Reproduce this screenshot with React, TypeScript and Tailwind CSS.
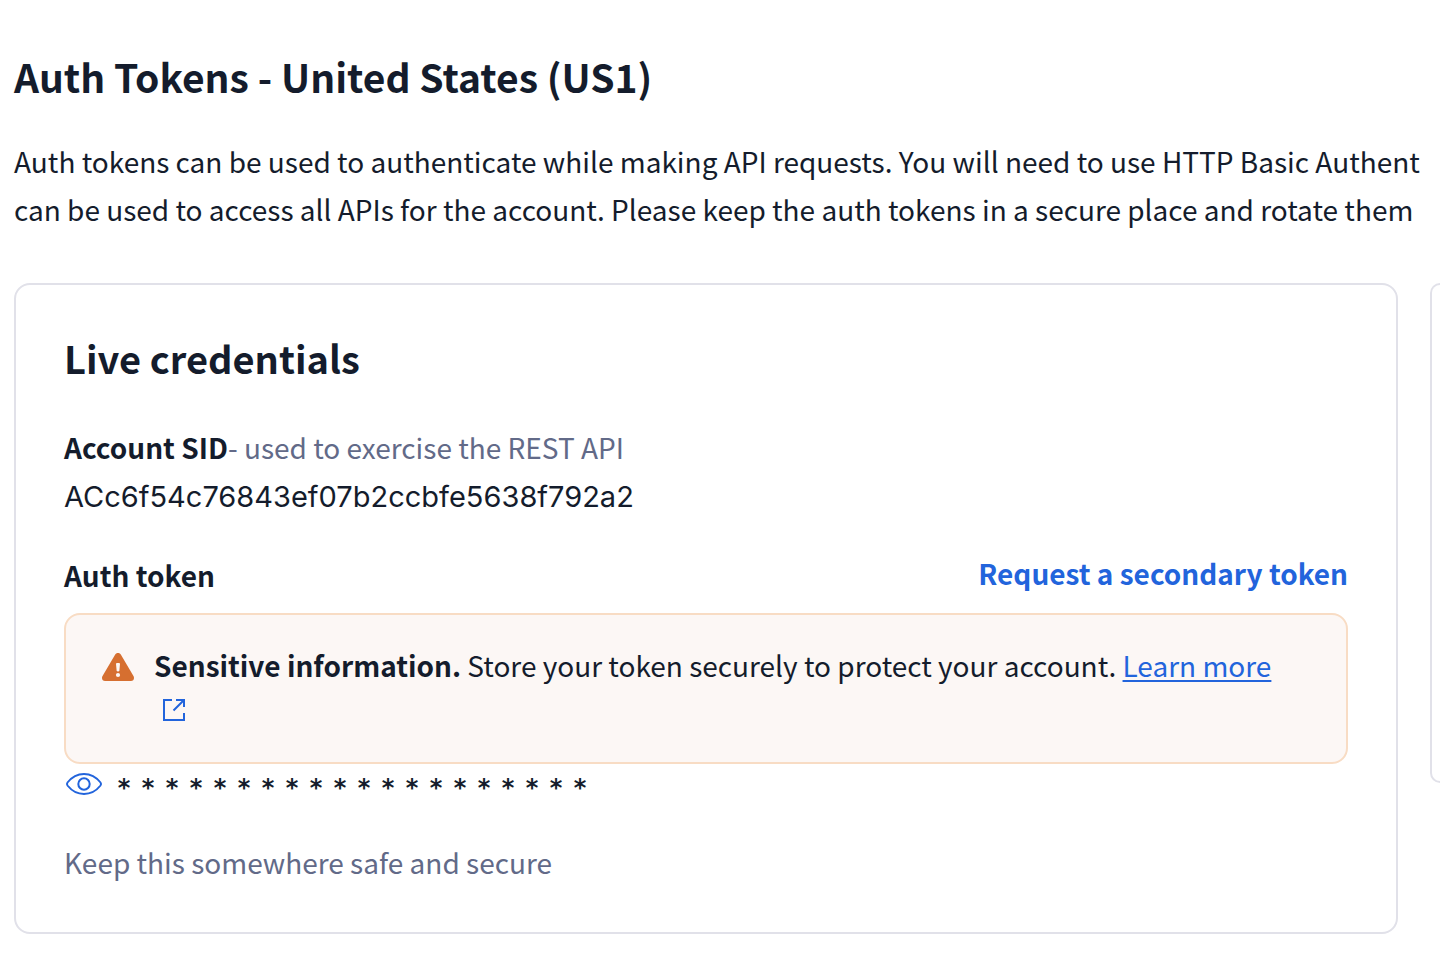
const MASK_LENGTH = 20;

function WarningIcon() {
  return (
    <svg className="h-7 w-8" viewBox="0 0 32 28" aria-hidden="true">
      <path
        d="M13.2 1.600a3.200 3.200 0 0 1 5.600 0l12.800 21.700c1.100 2.100-.2 4.700-2.700 4.700H3.100C.6 28-.7 25.400.4 23.300z"
        fill="#d66f30"
      />
      <path d="M14 11q0-1 1-1h2q1 0 1 1l-.6 6.200q-.2 1.300-1.400 1.300t-1.400-1.300z" fill="#fcf7f5" />
      <circle cx="16" cy="22" r="2.100" fill="#fcf7f5" />
    </svg>
  );
}

function ExternalIcon() {
  return (
    <svg className="h-6 w-6" viewBox="0 0 24 24" fill="none" stroke="#2264dc" strokeWidth="2" aria-hidden="true">
      <path d="M10 2H2v20h20v-7M14 2h8v7M22 2L11.500 12.500" />
    </svg>
  );
}

function EyeIcon() {
  return (
    <svg className="h-6 w-10" viewBox="0 0 40 24" fill="none" stroke="#2264dc" strokeWidth="2" aria-hidden="true">
      <path d="M3.500 10.500C7.500 5.500 13 2 20 2s12.500 3.500 16.500 8.500q1.100 1.500 0 3C32.500 18.500 27 22 20 22S7.500 18.500 3.500 13.500q-1.100-1.500 0-3z" />
      <circle cx="20" cy="12" r="5.700" />
    </svg>
  );
}

export default function App() {
  return (
    <main className="overflow-hidden bg-white pt-12 pl-[14px] pb-10 font-['Noto_Sans_CJK_SC','Noto_Sans',sans-serif] text-[28px] leading-[48px] text-[#141c2c]">
      <h1 className="text-[39px] font-semibold leading-[56px]">Auth Tokens - United States (US1)</h1>
      <p className="mt-[33px] whitespace-nowrap">
        Auth tokens can be used to authenticate while making API requests. You will need to use HTTP Basic Authent
        <br />
        can be used to access all APIs for the account. Please keep the auth tokens in a secure place and rotate them
      </p>

      <div className="mt-[50px] grid grid-cols-[minmax(0,1fr)_10px] items-start gap-8">
        <section className="rounded-[16px] border-2 border-[#e1e1e9] p-12">
          <h2 className="text-[38px] font-semibold leading-[50px]">Live credentials</h2>
          <p className="mt-10">
            <strong className="font-semibold">Account SID</strong>
            <span className="text-[#626a88]">- used to exercise the REST API</span>
          </p>
          <p className="font-['Inter',sans-serif] text-[29px] leading-[52px]">ACc6f54c76843ef07b2ccbfe5638f792a2</p>

          <div className="mt-7 flex items-start justify-between">
            <h3 className="font-semibold">Auth token</h3>
            <button type="button" className="font-semibold leading-11 text-[#2264dc]">
              Request a secondary token
            </button>
          </div>

          <div className="mt-[14px] flex gap-5 rounded-[16px] border-2 border-[#f8dcc4] bg-[#fcf7f5] px-9 pt-[26px] pb-[31px]">
            <div className="mt-3 shrink-0">
              <WarningIcon />
            </div>
            <div>
              <p>
                <strong className="font-semibold">Sensitive information.</strong> Store your token securely to protect
                your account.{" "}
                <a href="#learn-more" className="text-[#2264dc] underline decoration-2 underline-offset-3">
                  Learn more
                </a>
              </p>
              <a href="#learn-more" aria-label="Learn more in a new tab" className="ml-2 flex h-[42px] items-center">
                <ExternalIcon />
              </a>
            </div>
          </div>

          <div className="flex h-10 items-center gap-2">
            <button type="button" aria-label="Show auth token">
              <EyeIcon />
            </button>
            <span className="flex pt-2 font-['DejaVu_Sans',sans-serif] text-[24px] font-bold">
              {Array.from({ length: MASK_LENGTH }, (_, i) => (
                <span key={i} className="w-6 text-center">
                  *
                </span>
              ))}
            </span>
          </div>
          <p className="mt-10 mb-1 leading-9 text-[#626a88]">Keep this somewhere safe and secure</p>
        </section>
        <section className="h-[500px] rounded-l-[16px] border-2 border-r-0 border-[#e1e1e9]" />
      </div>
    </main>
  );
}
